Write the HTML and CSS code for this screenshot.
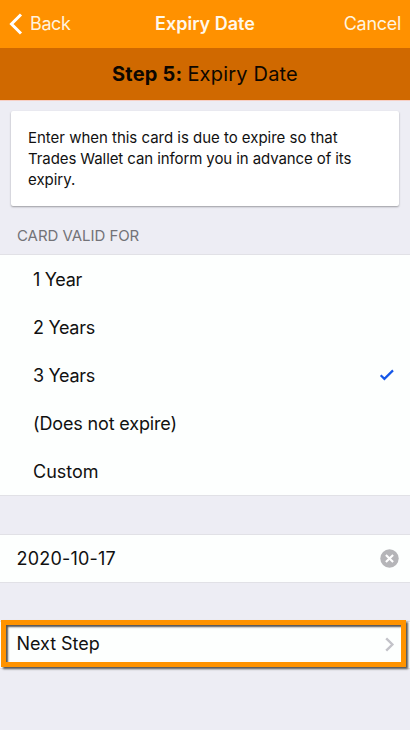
FILE: index.html
```html
<!DOCTYPE html>
<html lang="en">
<head>
<meta charset="utf-8">
<title>Expiry Date</title>
<link rel="stylesheet" href="styles.css">
</head>
<body>
<header class="navbar">
  <div class="nav-back">
    <svg class="back-icon" width="14" height="22" viewBox="0 0 14 22"><path d="M12 1.5 2.5 11 12 20.5"/></svg>
    <span class="back-text">Back</span>
  </div>
  <h1 class="nav-title">Expiry Date</h1>
  <div class="nav-cancel"><span>Cancel</span></div>
</header>
<div class="step-bar"><span class="step-number">Step 5:</span><span class="step-name">Expiry Date</span></div>
<main>
  <p class="info-card">Enter when this card is due to expire so that<br><span class="second-line">Trades Wallet can inform you in advance of its</span><br>expiry.</p>
  <h2 class="section-title"><span>CARD VALID FOR</span></h2>
  <ul class="options">
    <li><span class="years">1 Year</span></li>
    <li><span class="years">2 Years</span></li>
    <li><span class="years">3 Years</span><svg class="check" width="16" height="12" viewBox="0 0 16 12"><path d="M1.7 6.3 5.4 9.9 14 1.4"/></svg></li>
    <li><span class="never">(Does not expire)</span></li>
    <li><span class="custom">Custom</span></li>
  </ul>
  <div class="row date-row">
    <span class="date">2020-10-17</span>
    <svg class="clear" width="20" height="20" viewBox="0 0 20 20"><circle cx="10.5" cy="9.5" r="9.2"/><path d="m6.9 5.9 7.2 7.2m0-7.2-7.2 7.2"/></svg>
  </div>
  <div class="row next-row">
    <span class="next">Next Step</span>
    <svg class="chevron" width="10" height="16" viewBox="0 0 10 16"><path d="m1.2 2.3 6.2 6.2-6.2 6.2"/></svg>
    <div class="highlight"></div>
  </div>
</main>
</body>
</html>
```
FILE: styles.css
```css
* { box-sizing: border-box; }
body {
  margin: 0;
  min-height: 730px;
  background: #ededf4;
  color: #111;
  font: 18px/24px Inter, "Liberation Sans", sans-serif;
  white-space: nowrap;
  overflow: hidden;
}
h1, h2, p, ul { margin: 0; padding: 0; }
svg { display: block; fill: none; }
.navbar {
  display: grid;
  grid-template-columns: 1fr auto 1fr;
  align-items: center;
  height: 48px;
  padding: 0 9px;
  background: #ff9100;
  color: #fff3df;
}
.nav-back { display: flex; align-items: center; gap: 7px; letter-spacing: -0.4px; }
.back-icon { stroke: #fff; stroke-width: 3; }
.nav-title { color: #fff8ec; font-size: 18px; font-weight: 600; line-height: 24px; letter-spacing: 0; }
.nav-cancel { text-align: right; letter-spacing: -0.3px; }
.step-bar {
  display: flex;
  justify-content: center;
  align-items: center;
  gap: 5px;
  height: 53px;
  background: #d06900;
  border-bottom: 1px solid #f7cfc4;
  font-size: 20px;
  letter-spacing: 0.2px;
  color: #0d0700;
}
.step-number { font-weight: 700; }
.info-card {
  height: 95px;
  margin: 10px 11px 0;
  padding: 16px 16px 0 17px;
  background: #fff;
  border-radius: 2px;
  box-shadow: 0 1px 2px rgba(0, 0, 0, .35);
  font-size: 15px;
  line-height: 21px;
  letter-spacing: -0.02px;
}
.second-line { letter-spacing: -0.09px; }
.section-title {
  height: 48px;
  padding: 18px 17px 0;
  color: #737378;
  font-size: 15px;
  font-weight: 400;
  line-height: 24px;
  letter-spacing: -0.05px;
}
.options {
  height: 242px;
  display: grid;
  grid-template-rows: repeat(5, 1fr);
  background: #fdfffe;
  border-top: 1px solid #e1e1e6;
  border-bottom: 1px solid #e1e1e6;
  list-style: none;
}
.options li { display: flex; align-items: center; justify-content: space-between; padding: 1px 15px 0 33px; }
.years { letter-spacing: -0.3px; }
.never { letter-spacing: -0.15px; }
.check { margin-bottom: 2px; stroke: #1557e8; stroke-width: 2.2; }
.row {
  position: relative;
  display: flex;
  align-items: center;
  justify-content: space-between;
  height: 49px;
  padding: 0 11px 0 16.5px;
  background: #fdfffe;
  border-top: 1px solid #e1e1e6;
  border-bottom: 1px solid #e1e1e6;
}
.date-row { margin-top: 38px; }
.date { letter-spacing: 0.2px; }
.clear circle { fill: #b5b5b8; }
.clear path { stroke: #fff; stroke-width: 2.1; }
.next-row { margin-top: 38px; height: 48px; padding: 0 15px 2px 16.5px; }
.next { letter-spacing: -0.05px; }
.chevron { stroke: #c3c3c9; stroke-width: 2.4; }
.highlight {
  position: absolute;
  left: 1px;
  top: -2px;
  width: 405px;
  height: 47px;
  border: 5px solid #ff9300;
  box-shadow: 2px 2px 2px #555, inset 2px 2px 2px #555;
}
```
